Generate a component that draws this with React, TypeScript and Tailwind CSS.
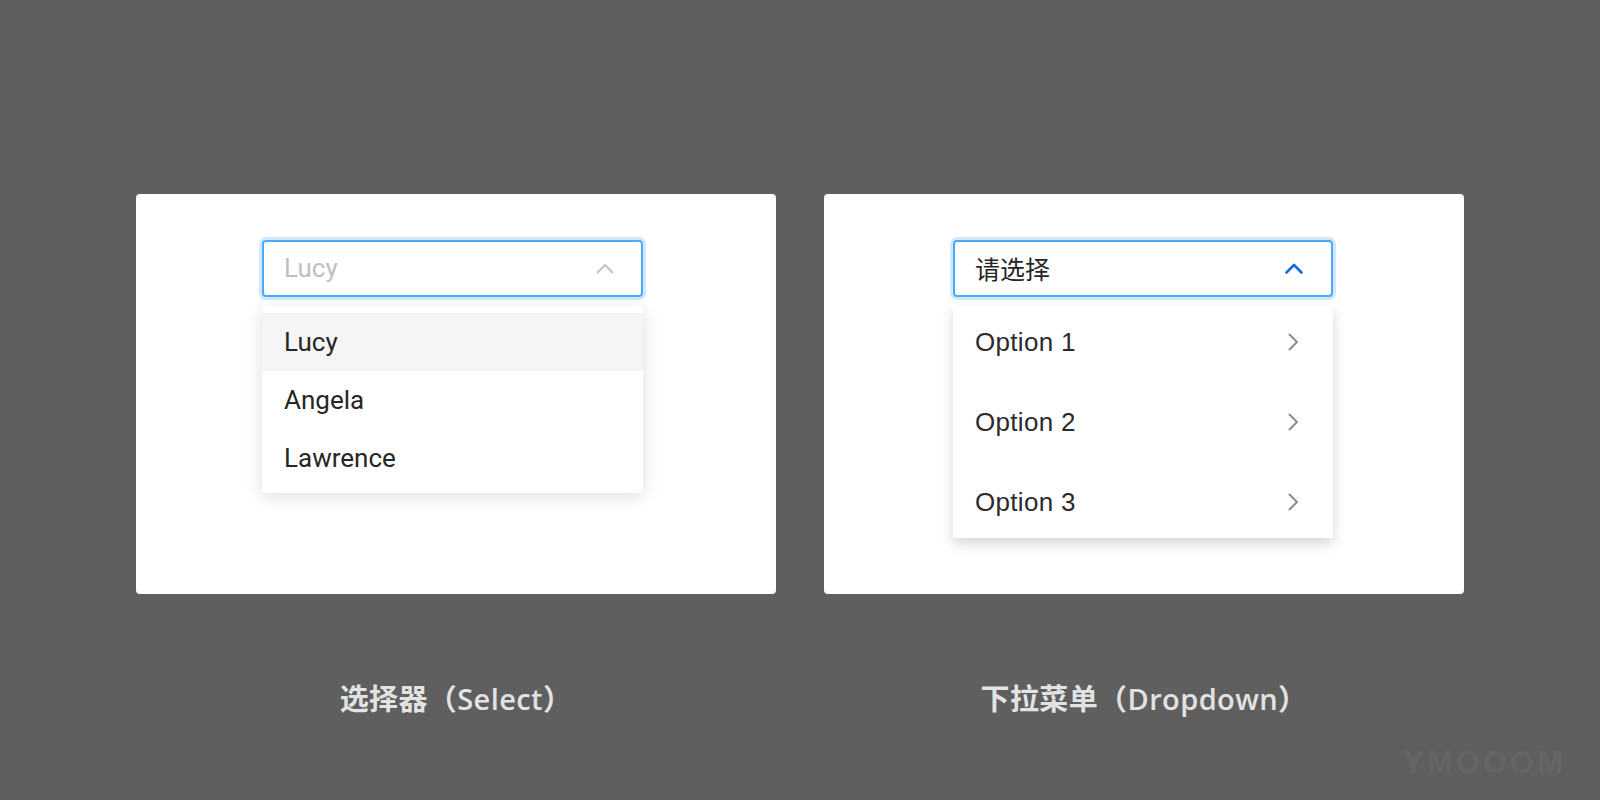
const sans = { fontFamily: '"Liberation Sans", "Noto Sans CJK SC", sans-serif' };
const caption = { fontFamily: '"Open Sans", "Noto Sans CJK SC", sans-serif' };

function ChevronUp({ color, width = 2 }: { color: string; width?: number }) {
  return (
    <svg width="18" height="11" viewBox="0 0 18 11" fill="none">
      <polyline points="1.5,9.5 9,2 16.5,9.5" stroke={color} strokeWidth={width} strokeLinecap="round" strokeLinejoin="round" />
    </svg>
  );
}

function ChevronRight() {
  return (
    <svg width="12" height="18" viewBox="0 0 12 18" fill="none">
      <polyline points="2.5,1.5 10,9 2.5,16.5" stroke="#8c8c8c" strokeWidth="2" strokeLinecap="round" strokeLinejoin="round" />
    </svg>
  );
}

function SelectCard() {
  const options = ['Lucy', 'Angela', 'Lawrence'];
  return (
    <div className="w-[640px] h-[400px] bg-white rounded-[4px] pt-[46px] pl-[126px]">
      <div className="w-[381px] h-[57px] border-2 border-[#4aa8ff] rounded-[4px] shadow-[0_0_0_3px_rgba(24,144,255,0.2)] flex items-center justify-between pl-[20px] pr-[27px]">
        <span className="text-[26px] text-[#bfbfbf]" style={{ fontFamily: 'Roboto, sans-serif' }}>Lucy</span>
        <ChevronUp color="#c4c4c4" />
      </div>
      <div className="mt-[9px] w-[381px] bg-white rounded-[4px] pt-[7px] pb-[6px] shadow-[0_4px_18px_rgba(0,0,0,0.13)]">
        {options.map((o, i) => (
          <div
            key={o}
            className={`h-[58px] flex items-center pl-[22px] text-[26px] text-[#262626] ${i === 0 ? 'bg-[#f5f5f5]' : ''}`}
            style={{ fontFamily: 'Roboto, sans-serif' }}
          >
            {o}
          </div>
        ))}
      </div>
    </div>
  );
}

function DropdownCard() {
  const options = ['Option 1', 'Option 2', 'Option 3'];
  return (
    <div className="w-[640px] h-[400px] bg-white rounded-[4px] pt-[46px] pl-[129px]">
      <div className="w-[380px] h-[57px] border-2 border-[#4aa8ff] rounded-[4px] shadow-[0_0_0_3px_rgba(24,144,255,0.2)] flex items-center justify-between pl-[20px] pr-[28px]">
        <span className="text-[25px] text-[#262626]" style={{ fontFamily: '"Noto Sans CJK SC", sans-serif' }}>请选择</span>
        <ChevronUp color="#1769e0" width={2.6} />
      </div>
      <div className="mt-[8px] w-[380px] bg-white pt-[25px] pb-[24px] flex flex-col gap-[56px] shadow-[0_6px_12px_rgba(0,0,0,0.16)]">
        {options.map((o) => (
          <div key={o} className="h-[24px] flex items-center justify-between pl-[22px] pr-[34px] text-[26px] tracking-[0.3px] text-[#2b2b2b]" style={sans}>
            <span>{o}</span>
            <ChevronRight />
          </div>
        ))}
      </div>
    </div>
  );
}

export default function App() {
  return (
    <div className="relative w-[1600px] h-[800px] bg-[#5f5f5f] overflow-hidden">
      <div className="flex gap-[48px] pt-[194px] pl-[136px]">
        <div className="flex flex-col items-center">
          <SelectCard />
          <div className="mt-[87px] text-[29px] leading-[36px] tracking-[0.4px] font-semibold text-[#e2e2e2]" style={caption}>
            选择器（Select）
          </div>
        </div>
        <div className="flex flex-col items-center">
          <DropdownCard />
          <div className="mt-[87px] text-[29px] leading-[36px] tracking-[0.4px] font-semibold text-[#e2e2e2]" style={caption}>
            下拉菜单（Dropdown）
          </div>
        </div>
      </div>
      <div className="absolute right-[34px] top-[740px] text-[31px] font-bold tracking-[3px] text-[#656565]" style={{ fontFamily: '"Liberation Sans", sans-serif' }}>
        YMOOOM
      </div>
    </div>
  );
}
